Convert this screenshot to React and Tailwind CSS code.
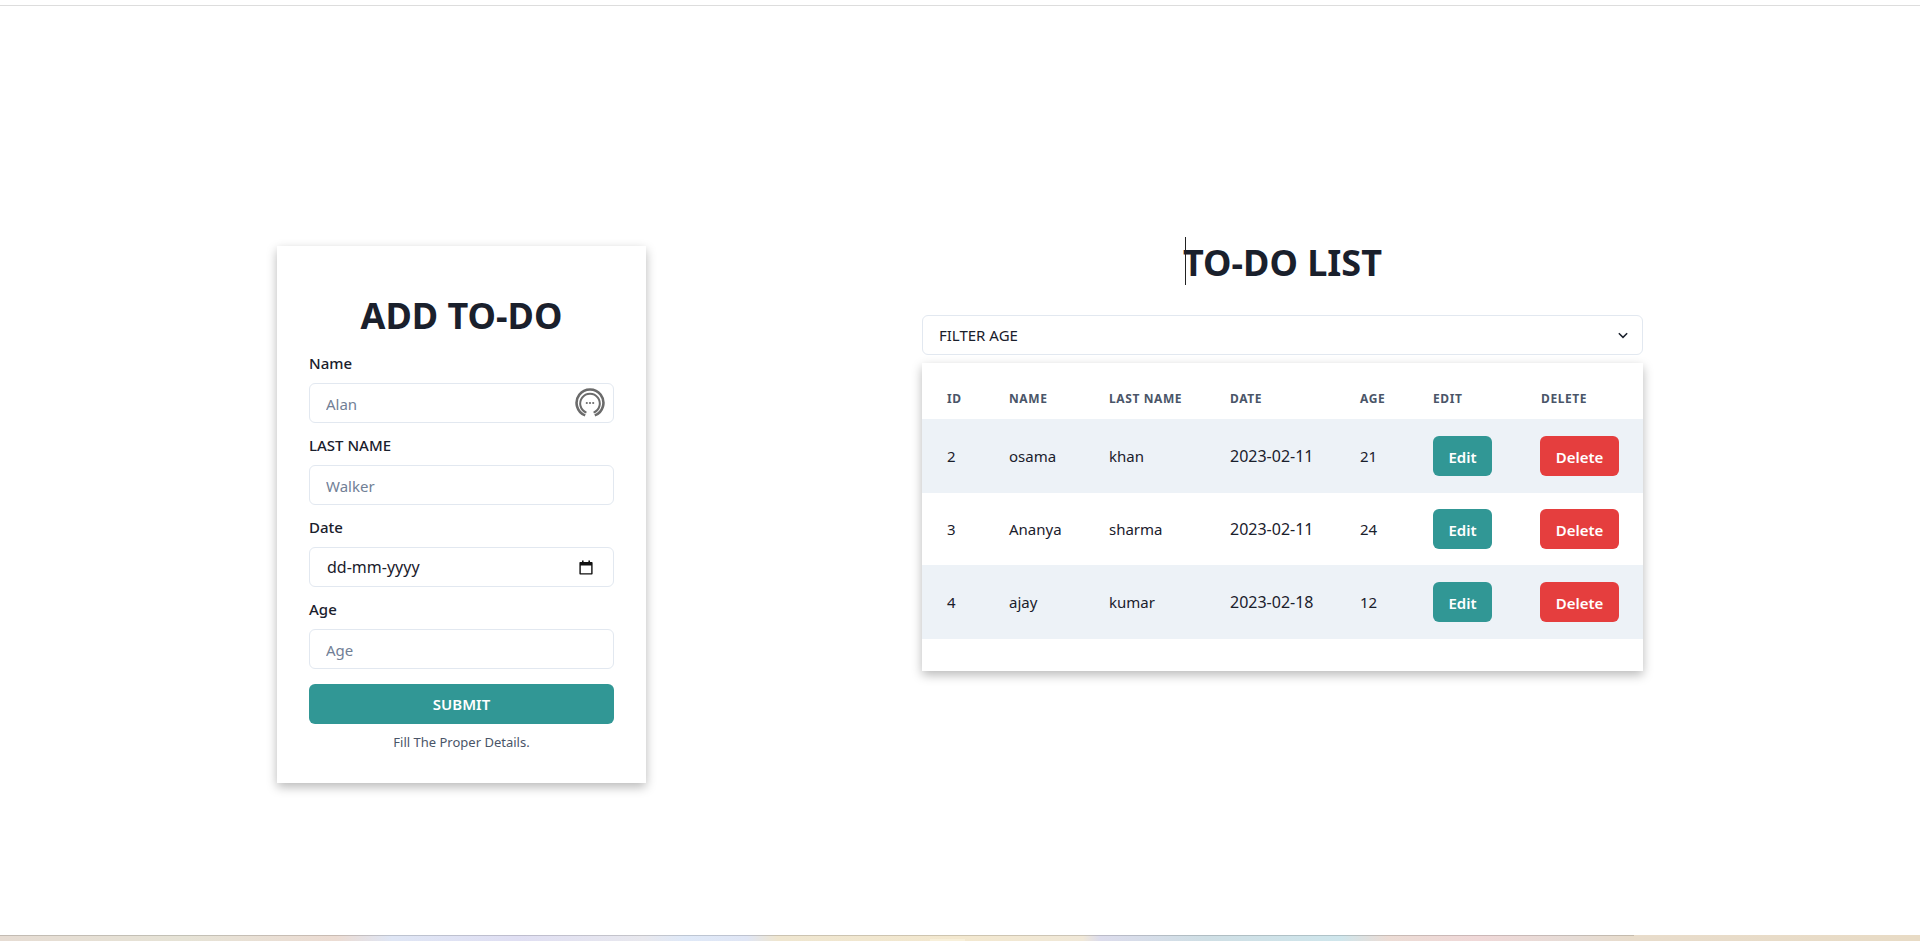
const FONT = "font-['Noto_Sans','Open_Sans',sans-serif]";

const rows = [
  { id: 2, name: "osama", last: "khan", date: "2023-02-11", age: 21, cls: "h-[74px] bg-[#edf2f7]" },
  { id: 3, name: "Ananya", last: "sharma", date: "2023-02-11", age: 24, cls: "h-[72px] bg-white" },
  { id: 4, name: "ajay", last: "kumar", date: "2023-02-18", age: 12, cls: "h-[74px] bg-[#edf2f7]" },
];

function Field({ label, placeholder, icon }) {
  return (
    <div className="flex flex-col">
      <label className="h-[37px] pt-[5px] text-[15px] font-medium leading-[24px] text-[#1a202c]">{label}</label>
      <div className="relative">
        <input
          placeholder={placeholder}
          className="h-10 w-full rounded-md border border-[#e2e8f0] bg-white px-4 pt-[2px] text-[15px] text-[#1a202c] outline-none placeholder:text-[#718096]"
        />
        {icon}
      </div>
    </div>
  );
}

function AssistIcon() {
  return (
    <svg viewBox="0 0 30 30" className="absolute right-[9px] top-[5px] h-[30px] w-[30px]" fill="none" stroke="#6b6b6b" strokeLinecap="butt">
      <path d="M10.2 27.4A13.4 13.4 0 1 1 19.8 27.4" strokeWidth="2.6" />
      <path d="M11.4 24.6A9.8 9.8 0 1 1 18.6 24.6" strokeWidth="2" />
      <circle cx="11.8" cy="15" r="1.1" fill="#6b6b6b" stroke="none" />
      <circle cx="15" cy="15" r="1.1" fill="#6b6b6b" stroke="none" />
      <circle cx="18.2" cy="15" r="1.1" fill="#6b6b6b" stroke="none" />
    </svg>
  );
}

function DateField() {
  return (
    <div className="flex flex-col">
      <label className="h-[37px] pt-[5px] text-[15px] font-medium leading-[24px] text-[#1a202c]">Date</label>
      <div className="flex h-10 items-center justify-between rounded-md border border-[#e2e8f0] bg-white pl-[17px] pr-[20px] text-[16px] text-[#1a202c]">
        <span>dd-mm-yyyy</span>
        <svg viewBox="0 0 14 15" className="h-[15px] w-[14px]">
          <path d="M3 0.5h1.6v1.5h4.8V0.5H11v1.5h1.6c.6 0 1 .4 1 1v10.5c0 .6-.4 1-1 1H1.4c-.6 0-1-.4-1-1V3c0-.6.4-1 1-1H3zM1.8 5.5v7.8h10.4V5.5z" fill="#111" />
        </svg>
      </div>
    </div>
  );
}

function Th({ children }) {
  return (
    <th className="pb-[9px] pl-[25px] pr-2 pt-[25px] text-left text-[12px] font-bold uppercase leading-[22px] tracking-[0.6px] text-[#4a5568]">
      {children}
    </th>
  );
}

function Td({ children, className = "text-[15px]" }) {
  return <td className={`pl-[25px] pr-2 text-[#1a202c] ${className}`}>{children}</td>;
}

export default function App() {
  return (
    <div className={`${FONT} relative h-[941px] w-full overflow-hidden bg-white`}>
      <div className="h-[6px] border-b border-[#dddddd]" />
      <main className="flex items-start pl-[277px]">
        <section className="mt-[240px] h-[537px] w-[369px] bg-white px-8 pt-[48px] shadow-[0_4px_10px_rgba(0,0,0,0.28)]">
          <h2 className="text-center text-[36px] font-bold leading-[43px] text-[#1a202c]">ADD TO-DO</h2>
          <div className="mt-[9px]">
            <Field label="Name" placeholder="Alan" icon={<AssistIcon />} />
            <div className="mt-[5px]"><Field label="LAST NAME" placeholder="Walker" /></div>
            <div className="mt-[5px]"><DateField /></div>
            <div className="mt-[5px]"><Field label="Age" placeholder="Age" /></div>
          </div>
          <button className="mt-[15px] h-10 w-full rounded-md bg-[#319795] pt-px text-[15px] font-semibold text-white">SUBMIT</button>
          <p className="mt-[8px] text-center text-[13px] leading-5 text-[#4a5568]">Fill The Proper Details.</p>
        </section>

        <section className="ml-[276px] w-[721px]">
          <div className="relative mt-[233px] h-[48px] text-center">
            <h2 className="text-[36px] font-bold leading-[48px] text-[#1a202c]">TO-DO LIST</h2>
            <span className="absolute left-[263px] top-[-2px] h-12 w-px bg-[#222]" />
          </div>
          <div className="relative mt-[28px]">
            <select className="h-10 w-full appearance-none rounded-md border border-[#e2e8f0] bg-white pl-[16px] pr-8 text-[15px] text-[#1a202c] outline-none">
              <option>FILTER AGE</option>
            </select>
            <svg viewBox="0 0 12 8" className="pointer-events-none absolute right-[15px] top-[17px] h-[7px] w-[10px]" fill="none" stroke="#1a202c" strokeWidth="1.8">
              <path d="M1 1.2l5 5 5-5" />
            </svg>
          </div>
          <div className="mt-[8px] h-[308px] bg-white shadow-[0_4px_10px_rgba(0,0,0,0.28)]">
            <table className="w-full table-fixed border-collapse">
              <colgroup>
                <col className="w-[62px]" />
                <col className="w-[100px]" />
                <col className="w-[121px]" />
                <col className="w-[130px]" />
                <col className="w-[73px]" />
                <col className="w-[108px]" />
                <col />
              </colgroup>
              <thead>
                <tr className="h-[56px]">
                  <Th>ID</Th>
                  <Th>Name</Th>
                  <Th><span className="whitespace-nowrap">Last Name</span></Th>
                  <Th>Date</Th>
                  <Th>Age</Th>
                  <Th>Edit</Th>
                  <Th>Delete</Th>
                </tr>
              </thead>
              <tbody>
                {rows.map((r) => (
                  <tr key={r.id} className={r.cls}>
                    <Td>{r.id}</Td>
                    <Td>{r.name}</Td>
                    <Td>{r.last}</Td>
                    <Td className="text-[16px]">{r.date}</Td>
                    <Td>{r.age}</Td>
                    <Td>
                      <button className="h-10 w-[59px] rounded-md bg-[#319795] pt-[2px] text-[15px] font-semibold text-white">Edit</button>
                    </Td>
                    <td className="pl-[24px]">
                      <button className="h-10 w-[79px] rounded-md bg-[#e53e3e] pt-[2px] text-[15px] font-semibold text-white">Delete</button>
                    </td>
                  </tr>
                ))}
              </tbody>
            </table>
          </div>
        </section>
      </main>
      <div className="absolute inset-x-0 bottom-0 h-[6px] bg-[linear-gradient(90deg,#e6dcd3_0%,#e6e3d6_9.6%,#ecdcd3_17.5%,#dfe6f5_20.4%,#e0dff3_27%,#e8e8ee_33.5%,#dfe9f8_35.7%,#e0e6f5_38.9%,#efe6d0_40.5%,#f3e8cf_50%,#f0e8d8_56.4%,#dcdcec_57.3%,#cfdfe5_62.8%,#cfe6ec_69.8%,#ecdcd5_72.3%,#f0d8d8_77%,#e6dcd6_81.9%,#e8dccb_85.1%,#e8dbc5_100%)]">
        <div className="h-px w-[85.1%] bg-black/15" />
        <div className="absolute bottom-0 left-[930px] h-[2px] w-[35px] bg-[#f8f0da]" />
      </div>
    </div>
  );
}
